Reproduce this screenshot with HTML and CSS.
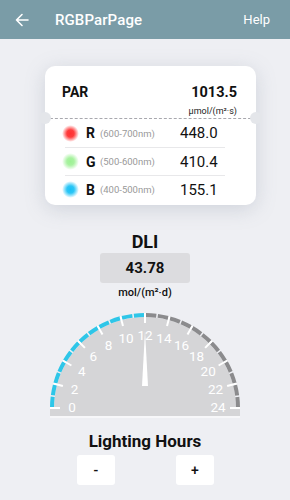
FILE: index.html
```html
<!DOCTYPE html>
<html>
<head>
<meta charset="utf-8">
<link rel="stylesheet" href="styles.css">
</head>
<body>
<header class="topbar">
  <svg class="back" width="16" height="16" viewBox="0 0 16 16"><path d="M14 8H2.5M8 2.5L2.5 8L8 13.5" fill="none" stroke="#fff" stroke-width="1.6" stroke-linecap="round" stroke-linejoin="round"/></svg>
  <span class="title">RGBParPage</span>
  <span class="help">Help</span>
</header>

<main class="content">
  <section class="card">
    <div class="par-head">
      <span class="par-label">PAR</span>
      <span class="par-value">1013.5</span>
    </div>
    <div class="par-unit">μmol/(m²·s)</div>
    <div class="divider"><span class="notch left"></span><span class="notch right"></span></div>
    <div class="rows">
      <div class="row">
        <span class="dot red"></span><span class="letter">R</span><span class="nm">(600-700nm)</span><span class="val">448.0</span>
      </div>
      <div class="row">
        <span class="dot green"></span><span class="letter">G</span><span class="nm">(500-600nm)</span><span class="val">410.4</span>
      </div>
      <div class="row">
        <span class="dot blue"></span><span class="letter">B</span><span class="nm">(400-500nm)</span><span class="val">155.1</span>
      </div>
    </div>
  </section>

  <h2 class="dli-title">DLI</h2>
  <div class="dli-box">43.78</div>
  <div class="dli-unit">mol/(m²·d)</div>

  <svg class="gauge" width="200" height="112" viewBox="0 0 200 112">
    <path d="M9 100 A91 91 0 0 1 191 100 Z" fill="#d5d5d7"/>
    <rect x="5" y="100" width="190" height="8" fill="#d5d5d7"/>
    <rect x="5" y="108" width="190" height="2" fill="#f7f7f9"/>
    <path d="M7 100 A93 93 0 0 1 100 7" fill="none" stroke="#2ec6e8" stroke-width="4" stroke-dasharray="10.67 1.5" stroke-dashoffset="11.42"/>
    <path d="M100 7 A93 93 0 0 1 193 100" fill="none" stroke="#8b8b8d" stroke-width="4" stroke-dasharray="10.67 1.5" stroke-dashoffset="11.42"/>
    <g stroke="#fff" stroke-width="2">
      <line x1="5" y1="100" x2="15" y2="100"/>
      <line x1="8.24" y1="75.41" x2="17.9" y2="78"/>
      <line x1="17.73" y1="52.5" x2="26.39" y2="57.5"/>
      <line x1="32.83" y1="32.83" x2="39.9" y2="39.9"/>
      <line x1="52.5" y1="17.73" x2="57.5" y2="26.39"/>
      <line x1="75.41" y1="8.24" x2="78" y2="17.9"/>
      <line x1="100" y1="5" x2="100" y2="15"/>
      <line x1="124.59" y1="8.24" x2="122" y2="17.9"/>
      <line x1="147.5" y1="17.73" x2="142.5" y2="26.39"/>
      <line x1="167.17" y1="32.83" x2="160.1" y2="39.9"/>
      <line x1="182.27" y1="52.5" x2="173.61" y2="57.5"/>
      <line x1="191.76" y1="75.41" x2="182.1" y2="78"/>
      <line x1="195" y1="100" x2="185" y2="100"/>
    </g>
    <g class="glabels" fill="#fff" text-anchor="middle" dominant-baseline="central">
      <text x="27" y="99">0</text>
      <text x="29.5" y="80.5">2</text>
      <text x="36.8" y="63">4</text>
      <text x="48.4" y="48">6</text>
      <text x="63.5" y="36.5">8</text>
      <text x="81.1" y="29.5">10</text>
      <text x="100" y="27">12</text>
      <text x="118.9" y="29.5">14</text>
      <text x="136.5" y="36.5">16</text>
      <text x="151.6" y="48">18</text>
      <text x="163.2" y="63">20</text>
      <text x="170.5" y="80.5">22</text>
      <text x="173" y="99">24</text>
    </g>
    <polygon points="100,23 103,78 97,78" fill="#fff"/>
  </svg>

  <h2 class="hours-title">Lighting Hours</h2>
  <div class="buttons">
    <button class="btn">-</button>
    <button class="btn">+</button>
  </div>
</main>
</body>
</html>
```

FILE: styles.css
```css
* { box-sizing: border-box; }
html, body {
  margin: 0;
  padding: 0;
}
body {
  width: 290px;
  height: 500px;
  overflow: hidden;
  background: #eeeff3;
  font-family: Roboto, "Liberation Sans", sans-serif;
  color: #111;
}
.topbar {
  height: 39px;
  background: #7a9ca7;
  display: flex;
  align-items: center;
  padding: 0 20px 0 14px;
  color: #fff;
}
.back { flex: none; }
.title {
  margin-left: 25px;
  font-size: 15px;
  font-weight: 500;
  letter-spacing: 0.1px;
}
.help {
  margin-left: auto;
  font-size: 13px;
}
.content {
  display: flex;
  flex-direction: column;
  align-items: center;
}
.card {
  align-self: flex-start;
  margin-left: 45px;
  margin-top: 27px;
  width: 211px;
  background: #fff;
  border-radius: 10px;
  box-shadow: 0 4px 20px rgba(120, 130, 150, 0.26);
  padding-bottom: 2px;
}
.par-head {
  display: flex;
  justify-content: space-between;
  align-items: center;
  padding: 18px 19px 0 17px;
  height: 34px;
}
.par-label {
  font-size: 14px;
  font-weight: 700;
}
.par-value {
  font-size: 14.5px;
  font-weight: 700;
}
.par-unit {
  text-align: right;
  padding-right: 19px;
  font-size: 9px;
  line-height: 12px;
  margin-top: 5px;
  color: #222;
}
.divider {
  position: relative;
  margin-top: 1px;
  height: 1px;
  border-top: 1px dashed #a8a8ae;
}
.notch {
  position: absolute;
  top: -7px;
  width: 12px;
  height: 12px;
  border-radius: 50%;
  background: #e4e6ea;
}
.notch.left { left: -6px; }
.notch.right { right: -6px; }
.rows {
  padding: 0 31px 0 20px;
}
.row {
  display: flex;
  align-items: center;
  height: 28px;
}
.row + .row { border-top: 1px solid #e8e8ea; }
.dot {
  width: 17px;
  height: 17px;
  margin-left: -3px;
  border-radius: 50%;
  flex: none;
}
.dot.red { background: radial-gradient(circle, #ff3030 0%, #ff3c3c 30%, rgba(255, 80, 80, 0) 70%); }
.dot.green { background: radial-gradient(circle, #9cf193 0%, #a8f2a0 30%, rgba(170, 240, 160, 0) 70%); }
.dot.blue { background: radial-gradient(circle, #18c0f6 0%, #2cc6f6 30%, rgba(60, 200, 245, 0) 70%); }
.letter {
  margin-left: 7px;
  font-size: 14px;
  font-weight: 700;
  width: 14px;
}
.nm {
  font-size: 9.5px;
  color: #999;
  width: 80px;
}
.val {
  font-size: 15px;
  color: #111;
}
.dli-title {
  margin: 26px 0 0;
  font-size: 18px;
  line-height: 22px;
  font-weight: 700;
}
.dli-box {
  margin-top: 0;
  width: 90px;
  height: 30px;
  background: #dcdcdf;
  border-radius: 3px;
  display: flex;
  align-items: center;
  justify-content: center;
  font-size: 15px;
  font-weight: 700;
}
.dli-unit {
  margin-top: 3px;
  font-size: 11px;
  line-height: 14px;
  font-weight: 500;
}
.gauge {
  margin-top: 8px;
  display: block;
}
.glabels {
  font-family: Roboto, "Liberation Sans", sans-serif;
  font-size: 13.5px;
  font-weight: 400;
}
.hours-title {
  margin: 10px 0 0;
  font-size: 17px;
  line-height: 22px;
  font-weight: 700;
}
.buttons {
  margin-top: 3px;
  display: flex;
  gap: 61px;
  margin-left: 1px;
}
.btn {
  width: 38px;
  height: 30px;
  border: none;
  border-radius: 3px;
  background: #fff;
  font-family: Roboto, "Liberation Sans", sans-serif;
  font-size: 14px;
  font-weight: 500;
  color: #111;
  padding: 0;
}
```
